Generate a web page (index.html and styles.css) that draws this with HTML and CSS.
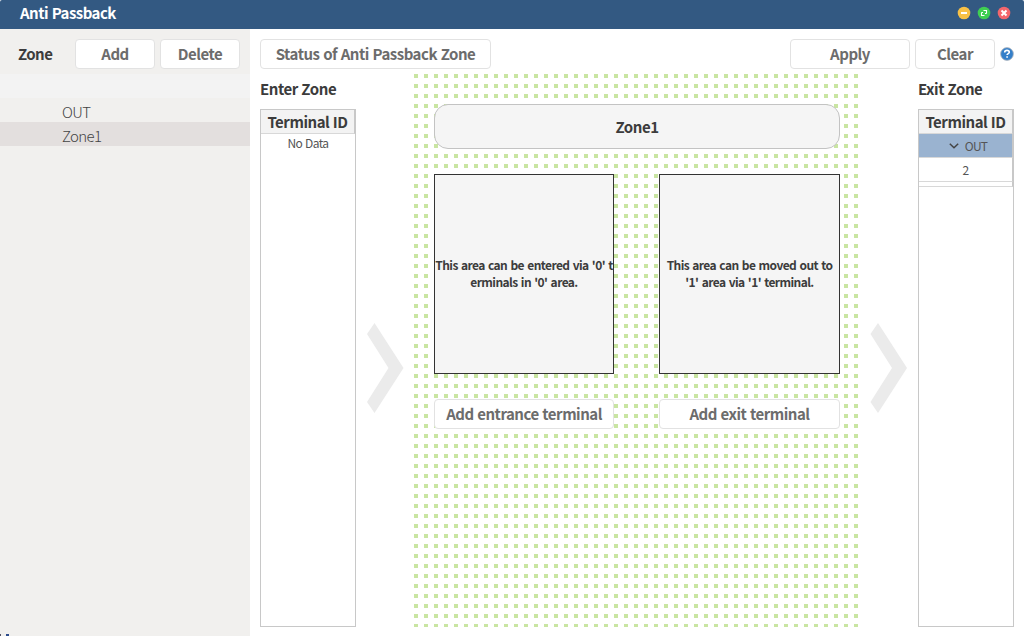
FILE: index.html
```html
<!DOCTYPE html>
<html lang="en">
<head>
<meta charset="utf-8">
<title>Anti Passback</title>
<link rel="stylesheet" href="styles.css">
</head>
<body>
<div class="window">
  <header class="titlebar">
    <h1 class="title">Anti Passback</h1>
    <div class="controls">
      <svg width="14" height="14" viewBox="0 0 14 14"><circle cx="7" cy="7" r="6.3" fill="#f8c146"/><path d="M4 7h6" stroke="#fff" stroke-width="2"/></svg>
      <svg width="14" height="14" viewBox="0 0 14 14"><circle cx="7" cy="7" r="6.3" fill="#3fcf52"/><path d="M6.5 4.5h3v3M9.5 7.5H8M4.5 6.5v3h3M4.5 6.5H6" fill="none" stroke="#fff" stroke-width="1.1"/></svg>
      <svg width="14" height="14" viewBox="0 0 14 14"><circle cx="7" cy="7" r="6.3" fill="#f2666c"/><path d="M4.5 4.5l5 5M9.5 4.5l-5 5" stroke="#fff" stroke-width="2"/></svg>
    </div>
  </header>
  <div class="body">
    <aside class="sidebar">
      <div class="side-tools">
        <span class="side-label">Zone</span>
        <button class="btn">Add</button>
        <button class="btn">Delete</button>
      </div>
      <div class="side-head"></div>
      <div class="side-row">OUT</div>
      <div class="side-row selected">Zone1</div>
      <div class="side-foot"><i></i><i></i></div>
    </aside>
    <main class="main">
      <div class="toolbar">
        <button class="btn status">Status of Anti Passback Zone</button>
        <button class="btn apply">Apply</button>
        <button class="btn">Clear</button>
        <svg class="help" width="14" height="14" viewBox="0 0 14 14"><circle cx="7" cy="7" r="6.4" fill="#347fc9" stroke="#b4b8bd" stroke-width=".8"/><path d="M4.7 5.4c0-1.3 1-2 2.3-2s2.3.7 2.3 1.9c0 1.4-2.2 1.3-2.2 2.8M7.1 9.2v1.6" fill="none" stroke="#fff" stroke-width="1.6"/></svg>
      </div>
      <div class="columns">
        <section class="zone">
          <h2 class="zone-title">Enter Zone</h2>
          <div class="table">
            <div class="th">Terminal ID</div>
            <div class="empty">No Data</div>
          </div>
        </section>
        <div class="arrow"><svg width="37" height="90" viewBox="0 0 37 90"><path d="M7.5 0L36.5 45 7.5 90 0 79 21.5 45 0 11z" fill="#ebebeb"/></svg></div>
        <section class="canvas">
          <div class="zone-name">Zone1</div>
          <div class="pair">
            <div class="area">This area can be entered via '0' t<br>erminals in '0' area.</div>
            <div class="area">This area can be moved out to<br>'1' area via '1' terminal.</div>
          </div>
          <div class="pair">
            <button class="btn wide">Add entrance terminal</button>
            <button class="btn wide">Add exit terminal</button>
          </div>
        </section>
        <div class="arrow"><svg width="37" height="90" viewBox="0 0 37 90"><path d="M8 0L37 45 8 90 .5 79 22 45 .5 11z" fill="#ebebeb"/></svg></div>
        <section class="zone">
          <h2 class="zone-title">Exit Zone</h2>
          <div class="table">
            <div class="th">Terminal ID</div>
            <div class="td group"><svg width="10" height="6" viewBox="0 0 10 6"><path d="M.8.8L5 4.7 9.2.8" fill="none" stroke="#444" stroke-width="1.5"/></svg>OUT</div>
            <div class="td">2</div>
            <div class="td-end"></div>
          </div>
        </section>
      </div>
    </main>
  </div>
</div>
</body>
</html>
```
FILE: styles.css
```css
* { box-sizing: border-box; }
body {
  margin: 0;
  font-family: "Noto Sans CJK KR", "Noto Sans", sans-serif;
  color: #3c3c3c;
  letter-spacing: -0.45px;
  word-spacing: 0.5px;
}
.window { width: 1024px; height: 636px; overflow: hidden; background: #fff; border-radius: 2px 2px 0 0; }
.titlebar {
  height: 29px; padding: 0 13px 0 20px;
  display: flex; align-items: center; justify-content: space-between;
  background: #335982;
}
.title { margin: 0; padding-bottom: 3px; font-size: 15px; line-height: 24px; font-weight: 700; color: #fff; letter-spacing: -0.55px; word-spacing: 1px; }
.controls { display: flex; gap: 6px; padding-bottom: 3px; }
.controls svg { display: block; }
.body { display: flex; height: 607px; }

.sidebar { width: 250px; background: #f1f0ee; display: flex; flex-direction: column; }
.side-tools { height: 45px; display: flex; align-items: center; padding: 5px 10px 0 18px; gap: 5px; }
.side-label { flex: 1; font-size: 15px; font-weight: 700; line-height: 30px; letter-spacing: -0.6px; }
.side-head { height: 24px; background: #f3f3f3; }
.side-row { height: 24px; padding-left: 62px; font-size: 15px; line-height: 28px; font-weight: 300; color: #444; letter-spacing: -0.6px; }
.side-row.selected { background: #e3dfde; }
.side-foot { margin-top: auto; display: flex; gap: 5px; height: 2px; }
.side-foot i { width: 1px; background: #556; }
.side-foot i + i { width: 3px; background: #2c4b8c; }

.btn {
  width: 80px; height: 30px; padding: 0;
  border: 1px solid #e2e2e2; border-radius: 4px;
  background: #fff; color: #6c6c6c;
  font-family: inherit; font-size: 15px; font-weight: 700; line-height: 28px;
  letter-spacing: -0.5px; word-spacing: 0.8px; white-space: nowrap;
}
.main { flex: 1; padding: 0 10px 9px; display: flex; flex-direction: column; }
.toolbar { height: 45px; padding-top: 5px; display: flex; align-items: center; gap: 5px; }
.status { width: 231px; margin-right: auto; }
.apply { width: 120px; }

.columns { flex: 1; display: grid; grid-template-columns: 96px 58px 445px 59px 96px; }
.zone { display: flex; flex-direction: column; }
.zone-title { margin: 0; height: 35px; font-size: 15px; line-height: 30px; font-weight: 700; }
.table { flex: 1; border: 1px solid #c8c8c8; text-align: center; }
.th {
  height: 24px; background: #f3f3f3; border-right: 1px solid #c8c8c8; border-bottom: 1px solid #d8d8d8;
  font-size: 15px; line-height: 24px; font-weight: 700; white-space: nowrap;
}
.empty { font-size: 12px; line-height: 17px; color: #555; letter-spacing: -0.55px; }
.td {
  height: 24px; font-size: 12px; line-height: 24px; color: #555;
  border-right: 1px solid #c8c8c8; border-bottom: 1px solid #d8d8d8;
}
.group { display: flex; align-items: center; justify-content: center; gap: 6px; padding-left: 5px; background: #9ab3d0; letter-spacing: -0.7px; }
.td-end { height: 5px; border-right: 1px solid #c8c8c8; border-bottom: 1px solid #d8d8d8; }

.arrow { padding: 249px 0 0 11px; }
.arrow svg { display: block; }

.canvas {
  padding: 30px 19px 0 20px;
  background: conic-gradient(from 0deg at 4px 4px, #fff 0 270deg, #c9e5a2 270deg) 0 0 / 10px 10px;
}
.zone-name {
  height: 45px; border: 1px solid #c3c3c3; border-radius: 14px; background: #f5f5f5;
  text-align: center; font-size: 15px; line-height: 44px; font-weight: 700;
}
.pair { margin-top: 25px; display: grid; grid-template-columns: 180px 181px; gap: 45px; }
.area {
  height: 200px; padding-bottom: 2px; border: 1px solid #333; background: #f5f5f5;
  display: flex; flex-direction: column; align-items: center; justify-content: center;
  text-align: center; font-size: 12px; line-height: 17px; font-weight: 700; white-space: nowrap;
  letter-spacing: -0.58px; word-spacing: 1.1px;
}
.btn.wide { width: 100%; }
```
